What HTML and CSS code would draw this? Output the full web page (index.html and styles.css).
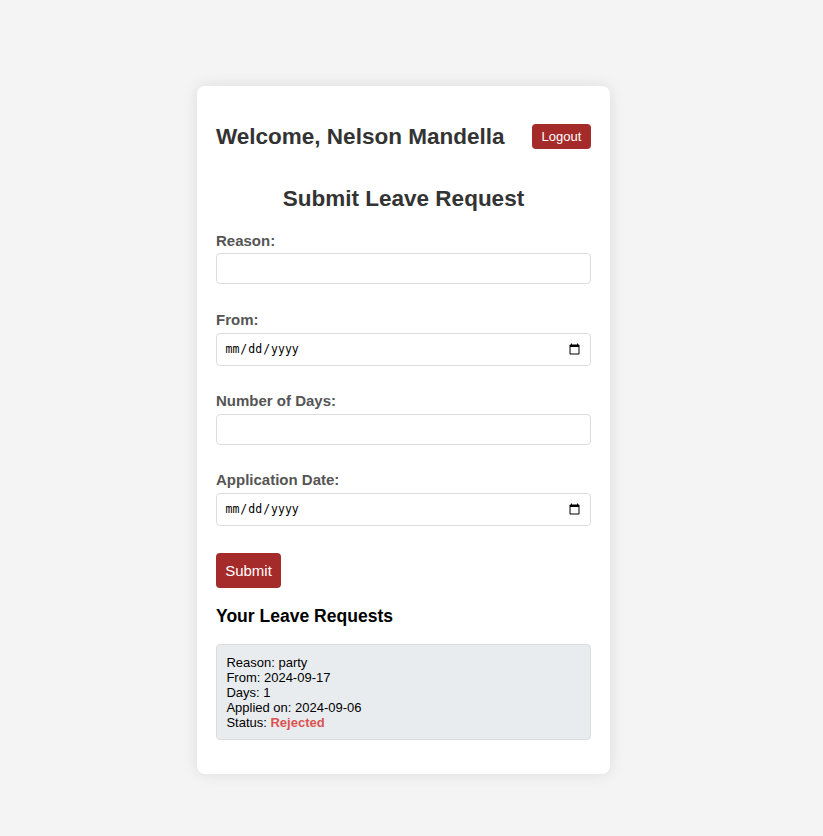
FILE: index.html
```html
<!DOCTYPE html>
<html lang="en">
<head>
<meta charset="utf-8">
<title>Leave Requests</title>
<link rel="stylesheet" href="styles.css">
</head>
<body>
<main class="card">
  <header class="top"><h2>Welcome, Nelson Mandella</h2><button class="logout">Logout</button></header>
  <h2 class="title">Submit Leave Request</h2>
  <form>
    <label for="reason">Reason:</label>
    <input type="text" id="reason">
    <label for="from">From:</label>
    <input type="date" id="from">
    <label for="days">Number of Days:</label>
    <input type="number" id="days">
    <label for="applied">Application Date:</label>
    <input type="date" id="applied">
    <button type="button" class="submit">Submit</button>
  </form>
  <h3>Your Leave Requests</h3>
  <ul>
    <li>Reason: party<br>From: 2024-09-17<br>Days: 1<br>Applied on: 2024-09-06<br>Status: <span class="rejected">Rejected</span></li>
  </ul>
</main>
</body>
</html>
```
FILE: styles.css
```css
* { box-sizing: border-box; }
body { margin: 0; min-height: 100vh; padding: 86px 0 0 197px; background: #f4f4f4; font-family: "Liberation Sans", Arial, sans-serif; font-size: 13px; }
.card { width: 413px; height: 688px; padding: 19px; background: #fff; border-radius: 8px; box-shadow: 0 0 15px rgba(0,0,0,.1); }
h2 { margin: 0; color: #333; font-size: 22.5px; line-height: 26px; }
.top { display: flex; justify-content: space-between; align-items: center; height: 63px; }
.title { text-align: center; margin: 18px 0 19.7px; }
label { display: block; margin-bottom: 4.6px; color: #555; font-size: 15px; line-height: 17px; font-weight: bold; }
input { display: block; width: 100%; height: 31px; margin: 0 0 26.65px; padding: 7.5px; border: 1px solid #ddd; border-radius: 4px; background: #fff; font-family: "Liberation Sans", sans-serif; font-size: 13px; }
input[type=date] { height: 33px; font-family: "DejaVu Sans Mono", monospace; font-size: 11.5px; }
input::-webkit-calendar-picker-indicator { width: 13px; height: 13px; }
button { border: 0; background: #a52a2a; color: #fff; font-family: inherit; border-radius: 4px; padding: 0; }
.logout { width: 59px; height: 25px; font-size: 13px; }
.submit { display: block; width: 65px; height: 35px; font-size: 15px; }
h3 { margin: 18px 0; font-size: 17.55px; line-height: 20px; }
ul { list-style: none; margin: 0; padding: 0; }
li { height: 96px; padding: 10px 9.4px; border: 1px solid #ddd; border-radius: 4px; background: #e9ecef; line-height: 15px; }
.rejected { color: #d9534f; font-weight: bold; }
```
